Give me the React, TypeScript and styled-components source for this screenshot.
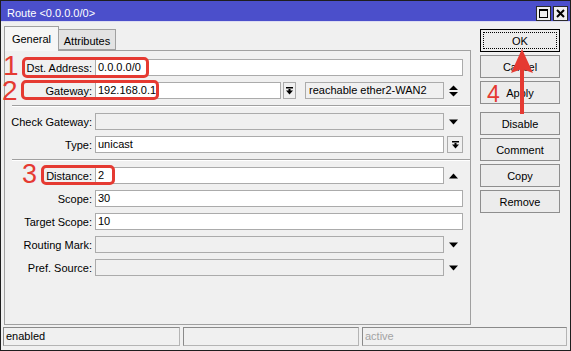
import { createGlobalStyle, styled } from 'styled-components';

const GlobalStyle = createGlobalStyle`
  html, body {
    margin: 0;
    padding: 0;
    background: #f0f0f0;
  }
`;

const RED = '#e53a32';

const Window = styled.div`
  position: relative;
  width: 571px;
  height: 351px;
  box-sizing: border-box;
  border: 1px solid #1e1e1e;
  background: #f0f0f0;
  display: flex;
  flex-direction: column;
  font: 11px 'Liberation Sans', Arial, sans-serif;
  color: #000;
  overflow: hidden;
`;

const TitleBar = styled.div`
  height: 21px;
  box-sizing: border-box;
  padding: 4px 2px 0 6px;
  background: #4b4fcb;
  border-bottom: 1px solid #dcdcf2;
  display: flex;
  align-items: center;
  justify-content: space-between;
  flex: none;
`;

const Title = styled.span`
  color: #fff;
  font-size: 11px;
`;

const TitleButtons = styled.div`
  display: flex;
  gap: 2px;
`;

const TitleButton = styled.div`
  width: 15px;
  height: 15px;
  box-sizing: border-box;
  border: 1px solid #2a2a2a;
  background: #efefef;
  display: flex;
  align-items: center;
  justify-content: center;
`;

const Main = styled.div`
  flex: 1;
  display: flex;
  padding: 4px 0 0 3px;
  min-height: 0;
`;

const TabArea = styled.div`
  width: 467px;
  display: flex;
  flex-direction: column;
`;

const TabStrip = styled.div`
  height: 24px;
  display: flex;
  align-items: flex-end;
  position: relative;
  z-index: 1;
  flex: none;
`;

const Tab = styled.div<{ $active?: boolean; $w: number }>`
  box-sizing: border-box;
  width: ${({ $w }) => $w}px;
  height: ${({ $active }) => ($active ? '25px' : '21px')};
  margin-bottom: ${({ $active }) => ($active ? '-1px' : '0')};
  padding-top: ${({ $active }) => ($active ? '0' : '2px')};
  border: 1px solid #a0a0a0;
  border-bottom: ${({ $active }) => ($active ? 'none' : '1px solid #a0a0a0')};
  border-left: ${({ $active }) => ($active ? '1px solid #a0a0a0' : 'none')};
  background: ${({ $active }) => ($active ? '#f6f6f6' : '#e3e3e3')};
  display: flex;
  align-items: center;
  justify-content: center;
`;

const Panel = styled.div`
  flex: 1;
  box-sizing: border-box;
  border: 1px solid #a0a0a0;
  background: #f0f0f0;
  padding-top: 8px;
  display: flex;
  flex-direction: column;
  gap: 6px;
`;

const Row = styled.div`
  display: flex;
  align-items: center;
  height: 17px;
`;

const Label = styled.div`
  width: 90px;
  box-sizing: border-box;
  padding-right: 3px;
  text-align: right;
  white-space: nowrap;
`;

const Field = styled.div`
  width: 368px;
  height: 17px;
  display: flex;
  align-items: center;
`;

const Input = styled.div<{ $disabled?: boolean }>`
  flex: 1;
  height: 17px;
  box-sizing: border-box;
  border: 1px solid #ababab;
  background: ${({ $disabled }) => ($disabled ? '#f0f0f0' : '#fff')};
  padding-left: 2px;
  line-height: 15px;
  white-space: nowrap;
  overflow: hidden;
`;

const InfoBox = styled.div`
  width: 139px;
  height: 17px;
  box-sizing: border-box;
  margin-left: 9px;
  border: 1px solid #ababab;
  background: #f0f0f0;
  padding-left: 3px;
  line-height: 15px;
  white-space: nowrap;
`;

const Slot = styled.div`
  width: 19px;
  height: 17px;
  flex: none;
  display: flex;
  align-items: center;
  justify-content: center;
`;

const ListButton = styled.div<{ $w: number; $gap: number }>`
  width: ${({ $w }) => $w}px;
  height: 17px;
  box-sizing: border-box;
  margin-left: ${({ $gap }) => $gap}px;
  border: 1px solid #ababab;
  background: #f0f0f0;
  flex: none;
  display: flex;
  align-items: center;
  justify-content: center;
`;

const Separator = styled.div`
  height: 0;
  margin-left: 7px;
  border-top: 1px solid #a0a0a0;
  border-bottom: 1px solid #fff;
`;

const ButtonColumn = styled.div`
  width: 80px;
  margin-left: 9px;
  padding-top: 3px;
  display: flex;
  flex-direction: column;
  gap: 3px;
`;

const Button = styled.div<{ $default?: boolean; $spaced?: boolean }>`
  position: relative;
  height: 23px;
  box-sizing: border-box;
  margin-top: ${({ $spaced }) => ($spaced ? '5px' : '0')};
  border: 1px solid ${({ $default }) => ($default ? '#000' : '#8e8e8e')};
  background: #ececec;
  display: flex;
  align-items: center;
  justify-content: center;
  &::after {
    content: '';
    display: ${({ $default }) => ($default ? 'block' : 'none')};
    position: absolute;
    inset: 2px;
    border: 1px dotted #000;
  }
`;

const StatusBar = styled.div`
  height: 25px;
  box-sizing: border-box;
  padding: 2px 3px 4px 2px;
  display: flex;
  gap: 3px;
  flex: none;
`;

const StatusCell = styled.div<{ $w?: number; $dim?: boolean }>`
  ${({ $w }) => ($w ? `width: ${$w}px;` : 'flex: 1;')}
  height: 19px;
  box-sizing: border-box;
  border: 1px solid #b4b4b4;
  border-left-color: #8a8a8a;
  border-top-color: #8a8a8a;
  padding-left: 2px;
  line-height: 17px;
  color: ${({ $dim }) => ($dim ? '#a3a3a3' : '#000')};
`;

const Callout = styled.div<{ $x: number; $y: number; $w: number; $h: number }>`
  position: absolute;
  left: ${({ $x }) => $x - 1}px;
  top: ${({ $y }) => $y - 1}px;
  width: ${({ $w }) => $w}px;
  height: ${({ $h }) => $h}px;
  box-sizing: border-box;
  border: 3px solid ${RED};
  border-radius: 5px;
  pointer-events: none;
`;

// line-height 0.75 keeps the box close to the cap height, so top = top of the digit
const Digit = styled.div<{ $x: number; $y: number; $size: number }>`
  position: absolute;
  left: ${({ $x }) => $x - 1}px;
  top: ${({ $y }) => $y - 1}px;
  font: ${({ $size }) => $size}px/0.75 'Liberation Sans', Arial, sans-serif;
  color: ${RED};
`;

const ArrowSvg = styled.svg`
  position: absolute;
  left: 504px;
  top: 43px;
`;

const DownArrow = () => (
  <svg width="9" height="6" viewBox="0 0 9 6">
    <polygon points="0,0.5 9,0.5 4.5,5.5" fill="#000" />
  </svg>
);

const UpArrow = () => (
  <svg width="9" height="6" viewBox="0 0 9 6">
    <polygon points="0,5.5 9,5.5 4.5,0.5" fill="#000" />
  </svg>
);

const UpDownArrow = () => (
  <svg width="9" height="12" viewBox="0 0 9 12">
    <polygon points="0,5 9,5 4.5,0.5" fill="#000" />
    <polygon points="0,7 9,7 4.5,11.5" fill="#000" />
  </svg>
);

const ListIcon = () => (
  <svg width="7" height="8" viewBox="0 0 7 8">
    <rect x="0" y="0" width="7" height="1.5" fill="#000" />
    <rect x="2.5" y="2" width="2" height="2" fill="#000" />
    <polygon points="0,3.5 7,3.5 3.5,7.5" fill="#000" />
  </svg>
);

function TextRow({ label, value, disabled, trail }: { label: string; value?: string; disabled?: boolean; trail?: 'down' | 'up' | 'list' }) {
  return (
    <Row>
      <Label>{label}</Label>
      <Field>
        <Input $disabled={disabled}>{value}</Input>
        {trail === 'down' && (
          <Slot>
            <DownArrow />
          </Slot>
        )}
        {trail === 'up' && (
          <Slot>
            <UpArrow />
          </Slot>
        )}
        {trail === 'list' && (
          <ListButton $w={16} $gap={3}>
            <ListIcon />
          </ListButton>
        )}
      </Field>
    </Row>
  );
}

export default function App() {
  return (
    <>
      <GlobalStyle />
      <Window>
        <TitleBar>
          <Title>Route &lt;0.0.0.0/0&gt;</Title>
          <TitleButtons>
            <TitleButton>
              <svg width="9" height="9" viewBox="0 0 9 9">
                <rect x="0.5" y="0.5" width="8" height="8" fill="none" stroke="#000" />
                <rect x="0" y="0" width="9" height="2" fill="#000" />
              </svg>
            </TitleButton>
            <TitleButton>
              <svg width="9" height="9" viewBox="0 0 9 9">
                <path d="M1 1 L8 8 M8 1 L1 8" stroke="#000" strokeWidth="2" />
              </svg>
            </TitleButton>
          </TitleButtons>
        </TitleBar>

        <Main>
          <TabArea>
            <TabStrip>
              <Tab $active $w={55}>General</Tab>
              <Tab $w={57}>Attributes</Tab>
            </TabStrip>
            <Panel>
              <TextRow label="Dst. Address:" value="0.0.0.0/0" />
              <Row>
                <Label>Gateway:</Label>
                <Field>
                  <Input>192.168.0.1</Input>
                  <ListButton $w={13} $gap={2}>
                    <ListIcon />
                  </ListButton>
                  <InfoBox>reachable ether2-WAN2</InfoBox>
                  <Slot>
                    <UpDownArrow />
                  </Slot>
                </Field>
              </Row>
              <Separator />
              <TextRow label="Check Gateway:" disabled trail="down" />
              <TextRow label="Type:" value="unicast" trail="list" />
              <Separator />
              <TextRow label="Distance:" value="2" trail="up" />
              <TextRow label="Scope:" value="30" />
              <TextRow label="Target Scope:" value="10" />
              <TextRow label="Routing Mark:" disabled trail="down" />
              <TextRow label="Pref. Source:" disabled trail="down" />
            </Panel>
          </TabArea>

          <ButtonColumn>
            <Button $default>OK</Button>
            <Button>Cancel</Button>
            <Button>Apply</Button>
            <Button $spaced>Disable</Button>
            <Button>Comment</Button>
            <Button>Copy</Button>
            <Button>Remove</Button>
          </ButtonColumn>
        </Main>

        <StatusBar>
          <StatusCell $w={177}>enabled</StatusCell>
          <StatusCell $w={176} />
          <StatusCell $dim>active</StatusCell>
        </StatusBar>

        <Callout $x={22} $y={57} $w={127} $h={21} />
        <Callout $x={21} $y={80} $w={138} $h={20} />
        <Callout $x={41} $y={165} $w={74} $h={20} />
        <Digit $x={3} $y={55} $size={28}>1</Digit>
        <Digit $x={2} $y={80} $size={28}>2</Digit>
        <Digit $x={22} $y={164} $size={27}>3</Digit>
        <Digit $x={487} $y={86} $size={23}>4</Digit>

        <ArrowSvg width="34" height="72" viewBox="0 0 34 72">
          <rect x="15" y="24" width="4" height="46" fill={RED} />
          <polygon points="17,5 6,29 17,25 28,29" fill={RED} />
        </ArrowSvg>
      </Window>
    </>
  );
}
